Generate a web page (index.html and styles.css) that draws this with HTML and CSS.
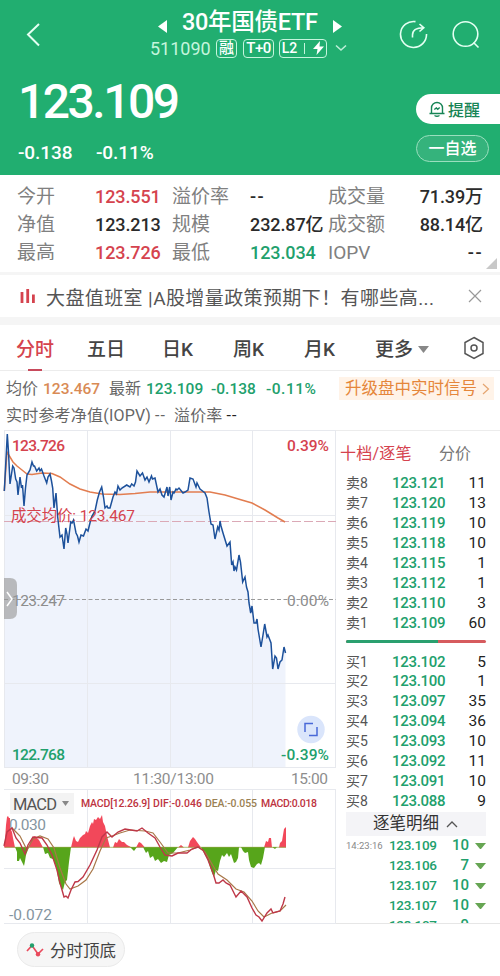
FILE: index.html
```
<!DOCTYPE html>
<html lang="zh-CN">
<head>
    <meta charset="UTF-8">
    <meta name="viewport" content="width=device-width, initial-scale=1.0">
    <title>30年国债ETF 511090</title>
    <link rel="stylesheet" href="styles.css">
</head>
<body>
    <!-- Quote header -->
    <header class="quote-header">
        <div class="nav">
            <svg class="back" width="16" height="26" viewBox="0 0 16 26"><path d="M14 2L3 12.5L14 23.500"/></svg>
            <div class="nav-title">
                <div class="name-row">
                    <svg width="9" height="13" viewBox="0 0 9 13"><path class="fill" d="M9 0V13L0 6.500z"/></svg>
                    <h1>30年国债ETF</h1>
                    <svg width="9" height="13" viewBox="0 0 9 13"><path class="fill" d="M0 0V13L9 6.500z"/></svg>
                </div>
                <div class="code-row">
                    <span class="code">511090</span>
                    <span class="tag tag-rong">融</span>
                    <span class="tag tag-t0">T+0</span>
                    <span class="tag tag-l2">L2<i></i><svg width="11" height="14" viewBox="0 0 11 14"><path class="fill" d="M7 0L0 8H4.500L3.500 14L11 5.500H6.500z"/></svg></span>
                    <svg class="chevron" width="12" height="8" viewBox="0 0 12 8"><path d="M1 1.500L6 6L11 1.500"/></svg>
                </div>
            </div>
            <svg class="share" width="30" height="30" viewBox="0 0 30 30"><path d="M16.500 1.600A13 13 0 1 0 27.500 14M13.500 17.500V15C13.500 10 17 7.800 24.500 7.800M20.500 4L24.800 7.800L20.500 11.500"/></svg>
            <svg class="search" width="30" height="30" viewBox="0 0 30 30"><circle cx="14.500" cy="14" r="12.300"/><path d="M22.500 22.500L27.500 27.500"/></svg>
        </div>
        <div class="quote">
            <div class="quote-price">
                <div class="price">123.109</div>
                <div class="change"><span>-0.138</span><span>-0.11%</span></div>
            </div>
            <div class="quote-actions">
                <div class="remind">
                    <svg width="16" height="16" viewBox="0 0 16 16"><path d="M2.500 12V7A5.500 5.500 0 0 1 13.500 7V12M0.500 12.500H15.500M5.500 14.500Q8 16 10.500 14.500M5.300 8.500L7.300 7L8.700 8.300L10.700 6.500"/></svg>
                    提醒
                </div>
                <div class="watch">一自选</div>
            </div>
        </div>
    </header>

    <!-- Key figures -->
    <section class="stats">
        <span class="label">今开</span><span class="red">123.551</span>
        <span class="label">溢价率</span><span class="empty">--</span>
        <span class="label">成交量</span><span class="right">71.39万</span>
        <span class="label">净值</span><span>123.213</span>
        <span class="label">规模</span><span>232.87亿</span>
        <span class="label">成交额</span><span class="right">88.14亿</span>
        <span class="label">最高</span><span class="red">123.726</span>
        <span class="label">最低</span><span class="green">123.034</span>
        <span class="label">IOPV</span><span class="right empty">--</span>
        <svg class="corner" width="11" height="11" viewBox="0 0 11 11"><path d="M11 0V11H0z"/></svg>
    </section>

    <section class="notice">
        <svg width="16" height="15" viewBox="0 0 16 15"><path d="M2 3V14M7.700 0V14M13.400 5.500V14"/></svg>
        <p>大盘值班室 |A股增量政策预期下！有哪些高...</p>
        <svg class="close" width="14" height="14" viewBox="0 0 14 14"><path d="M1 1L13 13M13 1L1 13"/></svg>
    </section>

    <nav class="tabs">
        <span class="tab active">分时</span>
        <span class="tab">五日</span>
        <span class="tab">日K</span>
        <span class="tab">周K</span>
        <span class="tab">月K</span>
        <span class="tab more">更多<svg width="11" height="7" viewBox="0 0 11 7"><path d="M0 0H11L5.500 7z"/></svg></span>
        <svg class="setting" width="22" height="24" viewBox="0 0 22 24"><path d="M11 1.500L20 6.500V17.500L11 22.500L2 17.500V6.500z"/><circle cx="11" cy="12" r="3"/></svg>
    </nav>

    <section class="info">
        <div class="info-row">
            <span>均价</span><span class="orange num">123.467</span>
            <span class="latest">最新</span><span class="green num">123.109</span>
            <span class="green num diff">-0.138</span><span class="green num pct">-0.11%</span>
            <span class="upgrade">升级盘中实时信号<svg width="8" height="12" viewBox="0 0 8 12"><path d="M1 1L6.500 6L1 11"/></svg></span>
        </div>
        <div class="info-row second">
            <span>实时参考净值(IOPV)</span><span class="dash">--</span><span class="premium">溢价率</span><span class="dash dark">--</span>
        </div>
    </section>

    <main class="board">
        <div class="charts">
            <!-- Intraday price -->
            <svg class="price-chart" width="336" height="360" viewBox="0 430 336 360">
                <path class="area" d="M4.300 491L7.300 434L10 484L12.700 466L15.700 479L18 495L20 477L24 506L27 475L30 470L32 462L36.700 471L44 476L46.700 483L50 474L52.700 488L54 508L56 493L57.700 517L60 537L64 549L65.700 528L68 543L70.700 522L76 533L79 542L86 529L90.700 520L95 511L101.700 487L105 508L110 508L113 497L118 486L134 486L137 471L145 480L155 478L158 492L171 500L174 491L188 490L190 478L196 487L205 493L211 524L215 539L220 521L227 546L230 542L231.700 565L234 571L239 555L242.700 582L248 592L254 623L257 619L261 647L264.700 624L271 643L272.700 669L275 656L278 669L284 647L285.500 653V767H4z"/>
                <path class="grid" d="M4.500 430V767.500M87.500 430V767.500M170.500 430V767.500M252.500 430V767.500M335.500 430V767.500M4 430.500H336M4 515.500H336M4 683.500H336M4 767.500H336M4 789.500H336"/>
                <path class="avg-level" d="M4 521.500H336"/>
                <path class="zero-level" d="M4 599.500H336"/>
                <path class="avg-line" d="M4.300 491L7 452L10 457L13 462L17 466L22 470L27 474L32 474.500L42 473L52 473.500L60 477L70 484L80 489L90 492L102 494L120 494.500L135 493.500L150 492H210L225 495L240 499.500L252 503L265 510L278 518L285 522"/>
                <path class="price-line" d="M4.300 491L7.300 434L8.500 452L10 484L12.700 466L14 468L15.700 479L17 482L18 495L20 477L21.500 488L22.500 485L24 506L25.500 488L27 475L30 470L32 462L33.500 466L34.500 466L36.700 471L39 468L40 471L41.500 469L44 476L46.700 483L48 477L50 474L51.500 481L52.700 488L54 508L56 493L57.700 517L60 537L62 535L64 549L65.700 528L67 534L68 543L70.700 522L72 523L73.500 520L76 533L77.500 536L79 542L81 535L83.500 536L86 529L88 531L90.700 520L92 516L95 511L97.300 500L99.500 492L101.700 487L103.500 497L105 508L107 506L108 508L110 508L113 497L115 492L116.500 494L118 486L120 490L122 488L126.700 485L130 487L131.700 484L134 486L135.500 482L137 471L140 476L142.500 473L145 480L147 477L149 482L151.500 476L152.500 479L155 478L158 492L160 489L162 495L164 497L167 487L168 496L169.700 487L171 500L173 492L174 493L176 489L177 490L179 488L183 493L185 492L188 490L190 478L193 479L196 487L197 483L200 489L205 493L207 498L209 512L211 524L213 525L215 539L217.700 527L219 530L220 521L221 526L223 533L227 546L230 542L231.700 565L233 562L234 571L235 567L236.500 570L239 555L240.500 562L242.700 582L245 577L246.500 587L248 592L249 603L250.700 613L252 606L254 623L256 623L257 619L258 629L261 647L263 635L264.700 624L267 637L268 635L271 643L272.700 669L275 656L276.500 658L278 669L280 662L282 660L284 647L285.500 653"/>
                <text class="red" x="12" y="451" textLength="53">123.726</text>
                <text class="red" x="287" y="451" textLength="42">0.39%</text>
                <text class="red avg-label" x="11" y="521" textLength="124">成交均价: 123.467</text>
                <text class="gray" x="12" y="606" textLength="53">123.247</text>
                <text class="gray" x="287" y="606" textLength="42">0.00%</text>
                <text class="green" x="12" y="760" textLength="53">122.768</text>
                <text class="green" x="281" y="760" textLength="48">-0.39%</text>
                <text class="gray" x="12" y="784" textLength="37">09:30</text>
                <text class="gray" x="133" y="784" textLength="81">11:30/13:00</text>
                <text class="gray" x="291" y="784" textLength="37">15:00</text>
                <path class="handle" d="M4 578H10Q17 578 17 585V612Q17 619 10 619H4z"/>
                <path class="handle-arrow" d="M7 592L12 599L7 606"/>
                <circle class="expand" cx="311" cy="729.500" r="13.700"/>
                <path class="expand-icon" d="M305 732V723.500H313M317 727V735.500H309"/>
            </svg>

            <!-- MACD -->
            <svg class="macd-chart" width="336" height="136" viewBox="0 790 336 136">
                <path class="grid" d="M87.500 790V923.500M170.500 790V923.500M252.500 790V923.500M335.500 790V923.500M4 868.500H336M4 923.500H336"/>
                <rect class="macd-select" x="10" y="793" width="64" height="21"/>
                <text class="macd-name" x="13" y="810" textLength="44">MACD</text>
                <path class="macd-caret" d="M62 801H69L65.500 806z"/>
                <g class="macd-legend">
                    <text class="dif" x="81" y="807" textLength="69">MACD[12.26.9]</text>
                    <text class="dif" x="153" y="807" textLength="49">DIF:-0.046</text>
                    <text class="dea" x="205" y="807" textLength="52">DEA:-0.055</text>
                    <text class="dif" x="261" y="807" textLength="56">MACD:0.018</text>
                </g>
                <text class="scale" x="9" y="830" textLength="37">0.030</text>
                <text class="scale" x="9" y="920" textLength="43">-0.072</text>
                <path class="up" d="M4 847.500L5 840L6 825L7 817L8 816L9 818L10 818V828L12 832L13 838L15 847.500zM29 847.500L30 843L32 838L35 836L37 838L39 840L43 847.500zM71 847.500L73 839L74 836L76 841L78 842L80 838L83 835L85 834L86 831L88 833L90 826L92 822L93 824L94 819L96 820L98 817L100 819L102 815L103 822L105 826L107 836L110 847.500zM113 847.500L115 842L117 843L119 839L122 842L124 842L127 845L132 847.500zM136 847.500L139 842L141 843L145 847.500zM178 847.500L181 845L184 847.500zM188 847.500L190 841L193 837L195 839L197 842L201 847.500zM264 847.500L266 841L268 842L269 838L271 838L272 847.500zM279 847.500L280 843L282 841L283 835L284 829L286 827V847.500z"/>
                <path class="down" d="M15 847L17 852V861H19L20 858L22 862L24 866L25 861L26 855L29 847zM43 847L45 854L48 853L50 858L53 859L56 866L59 883L61 887L63 890L65 882L67 880L69 862L71 847zM130 847L134 851L137 847zM143 847L146 853L148 851L150 858L153 856L155 861L158 859L161 863L164 861L167 862L169 855L173 853L178 847zM201 847L205 855L208 860L210 867L212 873L214 877L216 870L218 871L220 861L222 855L224 857L227 853L229 857L231 854L234 863L236 862L238 858L239 847zM241 847L243 851L245 853L248 852L249 860L251 867L254 868L257 864L259 863L261 865L263 858L265 847zM272 847L275 849L277 847z"/>
                <path class="zero" d="M5 847.300H286"/>
                <path class="dea-line" d="M12 828L16 832L20 836L27 850L33 839L40 836L48 839L54 848L60 868L66 884L70 889L78 886L86 880L93 869L100 851L106 838L112 836L120 833L130 830L145 831L153 833L160 842L168 853L178 853L190 850L198 847L205 852L212 864L218 874L227 880L236 889L244 892L252 901L258 911L264 917L272 913L280 911L286 905"/>
                <path class="dif-line" d="M4 846L7 832L12 828L16 838L20 843L25 854L28 845L33 837L42 838L47 845L52 855L57 870L60 883L64 897L66 896L68 898L71 890L75 882L78 881.500L83 877L90 865L97 850L102 837L107 832L112 837L118 832L125 829L137 831L142 828L148 833L155 838L160 847L165 855L172 856L178 853L187 853L192 849L198 847L203 850L208 860L213 873L216 883L219 883L223 880L226 883L230 885L236 897L241 891L247 897L252 908L256 915L259 917L262 921L267 913L271 909L273 913L280 911L283 904L285 897"/>
            </svg>
        </div>

        <!-- Order book -->
        <aside class="book">
            <div class="book-tabs"><span class="red">十档/逐笔</span><span>分价</span></div>
            <div class="orders">
                <div class="order"><span>卖8</span><b>123.121</b><em>11</em></div>
                <div class="order"><span>卖7</span><b>123.120</b><em>13</em></div>
                <div class="order"><span>卖6</span><b>123.119</b><em>10</em></div>
                <div class="order"><span>卖5</span><b>123.118</b><em>10</em></div>
                <div class="order"><span>卖4</span><b>123.115</b><em>1</em></div>
                <div class="order"><span>卖3</span><b>123.112</b><em>1</em></div>
                <div class="order"><span>卖2</span><b>123.110</b><em>3</em></div>
                <div class="order"><span>卖1</span><b>123.109</b><em>60</em></div>
            </div>
            <div class="ratio"><i style="width: 65.5%"></i></div>
            <div class="orders">
                <div class="order"><span>买1</span><b>123.102</b><em>5</em></div>
                <div class="order"><span>买2</span><b>123.100</b><em>1</em></div>
                <div class="order"><span>买3</span><b>123.097</b><em>35</em></div>
                <div class="order"><span>买4</span><b>123.094</b><em>36</em></div>
                <div class="order"><span>买5</span><b>123.093</b><em>10</em></div>
                <div class="order"><span>买6</span><b>123.092</b><em>11</em></div>
                <div class="order"><span>买7</span><b>123.091</b><em>10</em></div>
                <div class="order"><span>买8</span><b>123.088</b><em>9</em></div>
            </div>
            <div class="ticks-title">逐笔明细<svg width="12" height="7" viewBox="0 0 12 7"><path d="M1 6L6 1L11 6"/></svg></div>
            <!-- the last tick scrolls under the bottom edge -->
            <div class="ticks">
                <div class="tick"><span>14:23:16</span><b>123.109</b><em>10</em><i></i></div>
                <div class="tick"><span></span><b>123.106</b><em>7</em><i></i></div>
                <div class="tick"><span></span><b>123.107</b><em>10</em><i></i></div>
                <div class="tick"><span></span><b>123.107</b><em>10</em><i></i></div>
                <div class="tick"><span></span><b>123.107</b><em>9</em><i></i></div>
            </div>
        </aside>
    </main>

    <footer class="footer">
        <div class="signal">
            <svg width="18" height="14" viewBox="0 0 18 14"><path d="M1 8L6 2.500L12 11L17 6"/><circle class="dot-top" cx="6" cy="2.500" r="2.200"/><circle class="dot-bottom" cx="12" cy="11.300" r="2.200"/></svg>
            分时顶底
        </div>
    </footer>
</body>
</html>
```
FILE: styles.css
```
* {
    margin: 0;
    padding: 0;
    box-sizing: border-box;
}

body {
    width: 500px;
    height: 976px;
    overflow: hidden;
    background: #fff;
    color: #333;
    font-family: Roboto, 'Noto Sans CJK SC', sans-serif;
    font-size: 18px;
}

svg {
    display: block;
    flex: none;
    fill: none;
}

i, em {
    font-style: normal;
}

b {
    font-weight: 400;
}

span, p, h1 {
    white-space: nowrap;
}

.red {
    color: #d5434e;
    fill: #d5434e;
}

.green {
    color: #21a06c;
    fill: #21a06c;
}

.orange {
    color: #d98b55;
}

/* header */
.quote-header {
    height: 175px;
    background: #21ae70;
    color: #fff;
}

.quote-header svg {
    stroke: #e4fff2;
    stroke-width: 1.6;
}

.quote-header .fill {
    fill: #fff;
    stroke: none;
}

.nav {
    height: 64px;
    padding: 8px 19px 0 25px;
    display: flex;
}

.nav .back {
    margin-top: 14px;
    stroke-width: 2;
}

.nav-title {
    width: 200px;
    margin-left: 109px;
}

.name-row {
    height: 29px;
    padding-left: 8px;
    display: flex;
    align-items: center;
}

.name-row svg {
    margin-top: 7px;
}

h1 {
    width: 138px;
    margin: 0 13px 0 15px;
    font-size: 23.5px;
    font-weight: 500;
    line-height: 29px;
    letter-spacing: -0.3px;
}

.code-row {
    height: 22px;
    display: flex;
    align-items: center;
}

.code {
    width: 65px;
    font-size: 18px;
    color: #c5f5dd;
}

.tag {
    height: 19px;
    border: 1px solid #c5f5dd;
    border-radius: 4px;
    display: flex;
    align-items: center;
    justify-content: center;
    font-size: 15px;
    font-weight: 500;
    line-height: 17px;
}

.tag-rong {
    width: 21px;
    margin-left: 1px;
}

.tag-t0 {
    width: 31px;
    margin-left: 6px;
    letter-spacing: -0.5px;
}

.tag-l2 {
    width: 48px;
    margin-left: 5px;
    font-size: 14px;
}

.tag-l2 i {
    width: 1px;
    height: 11px;
    margin: 0 8px 0 7px;
    background: #c5f5dd;
}

.chevron {
    margin-left: 8px;
    opacity: 0.8;
}

.share {
    margin: 12px 0 0 50px;
}

.search {
    margin: 12px 0 0 22px;
}

.quote {
    display: flex;
    justify-content: space-between;
}

.quote-price {
    padding: 10px 0 0 18px;
}

.price {
    height: 56px;
    font-size: 48px;
    font-weight: 500;
    line-height: 56px;
    letter-spacing: -2.5px;
}

.change {
    display: flex;
    margin-top: 12px;
    font-size: 19px;
    font-weight: 500;
    line-height: 22px;
}

.change span {
    width: 78px;
    letter-spacing: -0.1px;
}

.quote-actions {
    width: 84px;
    padding-top: 30px;
}

.remind {
    height: 30px;
    padding-left: 13px;
    border-radius: 15px 0 0 15px;
    background: #fff;
    color: #168455;
    display: flex;
    align-items: center;
    gap: 3px;
    font-size: 16px;
    font-weight: 500;
}

.quote-header .remind svg {
    stroke: #168455;
    stroke-width: 1.4;
}

.watch {
    width: 73px;
    height: 27px;
    margin-top: 11px;
    border: 1px solid #9adfbe;
    border-radius: 14px;
    background: #35b37c;
    font-size: 16px;
    font-weight: 500;
    line-height: 25px;
    text-align: center;
}

/* stats */
.stats {
    position: relative;
    height: 97px;
    padding: 8px 17px 0 17px;
    display: grid;
    grid-template-columns: 78px 77px 78px 78px 70px 1fr;
    grid-auto-rows: 28px;
    line-height: 28px;
    color: #2b2b2b;
    font-weight: 500;
    letter-spacing: -0.1px;
}

.stats .red {
    color: #d5434e;
}

.stats .green {
    color: #21a06c;
}

.stats .label {
    color: #808080;
    font-size: 19px;
    font-weight: 400;
    letter-spacing: 0;
}

.stats .empty {
    letter-spacing: 1.5px;
}

.right {
    text-align: right;
}

.corner {
    position: absolute;
    right: 3px;
    bottom: 3px;
    fill: #c8c8c8;
}

.notice {
    height: 53px;
    padding: 0 18px 0 20px;
    border-top: 3px solid #f5f5f5;
    border-bottom: 8px solid #f5f5f5;
    display: flex;
    align-items: center;
    color: #555;
    font-size: 19px;
}

.notice svg {
    stroke: #d5434e;
    stroke-width: 2.8;
}

.notice p {
    width: 392px;
    margin-left: 10px;
    letter-spacing: 0.4px;
}

.notice .close {
    margin-left: auto;
    stroke: #999;
    stroke-width: 1.2;
}

/* period tabs */
.tabs {
    height: 46px;
    padding: 0 15px 0 16px;
    border-bottom: 1px solid #ececec;
    display: flex;
    align-items: center;
    font-size: 19px;
    font-weight: 500;
    color: #444;
}

.tab {
    position: relative;
    width: 71px;
    padding-top: 3px;
    line-height: 43px;
}

.tab:nth-child(2) {
    width: 75px;
}

.tab.active {
    color: #d5434e;
}

.tab.active::after {
    content: '';
    position: absolute;
    left: 12px;
    bottom: 0;
    width: 14px;
    height: 2px;
    background: #c84a5c;
}

.tab.more {
    width: 56px;
    display: flex;
    align-items: center;
    gap: 5px;
}

.more svg {
    fill: #888;
}

.setting {
    margin-left: auto;
    stroke: #555;
    stroke-width: 1.5;
}

.info {
    height: 59px;
    padding: 4px 6px 0;
    color: #666;
    font-size: 16px;
}

.info-row {
    height: 27px;
    display: flex;
    align-items: baseline;
    line-height: 27px;
}

.info-row span {
    flex: none;
}

.info .num {
    margin-left: 5px;
    width: 57px;
    font-size: 15.5px;
    font-weight: 500;
}

.info .latest {
    margin-left: 9px;
}

.info .diff {
    margin-left: 8px;
    width: 46px;
}

.info .pct {
    margin-left: 9px;
    width: 53px;
    letter-spacing: 0.5px;
}

.upgrade {
    width: 155px;
    height: 23px;
    margin-left: auto;
    padding-left: 6px;
    background: #fff3e8;
    color: #e5863a;
    display: flex;
    align-items: center;
    gap: 5px;
    line-height: 23px;
    font-size: 16.5px;
}

.upgrade svg {
    stroke: #e5a570;
    stroke-width: 1.2;
}

.second {
    letter-spacing: 0.2px;
}

.dash {
    margin-left: 4px;
    letter-spacing: 1px;
}

.premium {
    margin-left: 8px;
}

.dark {
    color: #222;
}

/* charts */
.board {
    height: 496px;
    display: flex;
}

.charts {
    width: 336px;
}

.charts text {
    font-size: 15.5px;
}

.charts .price-chart .red,
.charts .price-chart .green {
    font-weight: 500;
}

.charts .price-chart .avg-label {
    font-weight: 400;
}

.charts .gray {
    fill: #8d8d8d;
}

.grid {
    stroke: #e7e9ee;
    stroke-width: 1;
}

.area {
    fill: #eff3fc;
}

.avg-level {
    stroke: #dba9b6;
    stroke-dasharray: 9 3;
}

.zero-level {
    stroke: #999;
    stroke-dasharray: 4 2.5;
}

.price-line {
    stroke: #1d519b;
    stroke-width: 1.5;
}

.avg-line {
    stroke: #e27d50;
    stroke-width: 1.5;
}

.handle {
    fill: #999;
    fill-opacity: 0.65;
}

.handle-arrow {
    stroke: #fff;
    stroke-width: 1.5;
}

.expand {
    fill: #dae5fb;
}

.expand-icon {
    stroke: #4868d8;
    stroke-width: 1.5;
}

.macd-select {
    fill: #f3f3f3;
}

.charts .macd-name {
    font-size: 16.5px;
    fill: #555;
}

.macd-caret {
    fill: #888;
}

.charts .macd-legend text {
    font-size: 10.5px;
    font-weight: 500;
}

.dif {
    fill: #bd3340;
}

.dea {
    fill: #9b8154;
}

.scale {
    fill: #8595a0;
}

.up {
    fill: #f2485a;
}

.down {
    fill: #57a51b;
}

.zero {
    stroke: #8ca43c;
    stroke-width: 0.7;
}

.dif-line {
    stroke: #be3848;
    stroke-width: 1.4;
}

.dea-line {
    stroke: #a87748;
    stroke-width: 1.2;
}

/* order book */
.book {
    width: 164px;
    height: 494px;
    padding: 0 14px 0 10px;
    border-top: 1px solid #ececec;
    border-bottom: 1px solid #e6e6e6;
    overflow: hidden;
}

.book-tabs {
    height: 42px;
    margin-left: -6px;
    display: flex;
    gap: 28px;
    align-items: center;
    color: #777;
    font-size: 16px;
}

.book-tabs .red {
    width: 71px;
    letter-spacing: 0.2px;
}

.order {
    height: 19.95px;
    display: grid;
    grid-template-columns: 46px 60px 1fr;
    align-items: center;
    padding-top: 1px;
    line-height: 19px;
}

.order span {
    color: #555;
    font-size: 14px;
}

.order b,
.tick b {
    color: #21a06c;
    font-size: 15px;
    font-weight: 500;
    letter-spacing: -0.3px;
}

.order em {
    color: #222;
    font-size: 15.5px;
    text-align: right;
}

.ratio {
    height: 3px;
    margin: 7px 0 9px;
    border-radius: 2px;
    background: #d65b5e;
    overflow: hidden;
}

.ratio i {
    display: block;
    height: 3px;
    background: #2aa06f;
}

.ticks-title {
    height: 24px;
    margin-top: 1px;
    padding-left: 27px;
    background: #f4f4f7;
    display: flex;
    align-items: center;
    gap: 7px;
    font-size: 16.5px;
    line-height: 24px;
}

.ticks-title svg {
    stroke: #555;
    stroke-width: 1.3;
}

.tick {
    height: 19.9px;
    display: grid;
    grid-template-columns: 43px 50px 1fr 11px;
    align-items: center;
    line-height: 19px;
}

.tick span {
    color: #888;
    font-size: 9.5px;
}

.tick b {
    font-size: 13.5px;
}

.tick em {
    padding-right: 6px;
    color: #21a06c;
    font-size: 15px;
    font-weight: 500;
    text-align: right;
}

.tick i {
    border: 5.5px solid transparent;
    border-top: 6px solid #66a552;
    border-bottom: 0;
}

.footer {
    padding: 6px 17px;
}

.signal {
    width: 108px;
    height: 35px;
    padding-left: 8px;
    border: 1px solid #eaeaea;
    border-radius: 18px;
    background: #f6f6f6;
    display: flex;
    align-items: center;
    gap: 6px;
    font-size: 16.5px;
    color: #444;
}

.signal svg {
    stroke: #e94a5c;
    stroke-width: 1.7;
}

.signal .dot-top {
    fill: #21a06c;
    stroke: none;
}

.signal .dot-bottom {
    fill: #e94a5c;
    stroke: none;
}
```
